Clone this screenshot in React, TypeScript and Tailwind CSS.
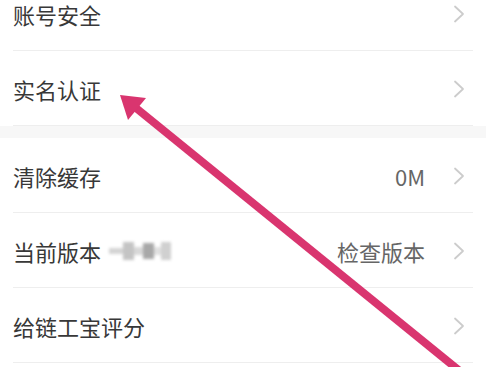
function Chevron() {
  return (
    <svg width="12" height="18" viewBox="0 0 12 18" className="shrink-0">
      <path d="M2 1.5 L10 9 L2 16.5" fill="none" stroke="#cccccc" strokeWidth="1.8" strokeLinecap="round" strokeLinejoin="round" />
    </svg>
  );
}

function Row({ label, value, extra, first }: { label: string; value?: string; extra?: React.ReactNode; first?: boolean }) {
  return (
    <div
      className={
        first
          ? "mx-[13px] h-[51px] border-b border-[#eeeeee] flex items-start pt-[3px]"
          : "mx-[13px] h-[75px] border-b border-[#eeeeee] flex items-center pt-[2px]"
      }
    >
      <span className="text-[22px] leading-[22px] text-[#383838]">{label}</span>
      {extra}
      <div className="flex-1" />
      {value && <span className="text-[22px] leading-[22px] text-[#666666] mr-[28px]">{value}</span>}
      <div className="mr-[8px] flex items-center h-[22px]">
        <Chevron />
      </div>
    </div>
  );
}

function BlurredVersion() {
  return (
    <div className="ml-[8px] flex items-center blur-[1.5px]">
      <div className="w-[14px] h-[6px] bg-[#d4d4d4]" />
      <div className="w-[11px] h-[18px] bg-[#c4c4c4]" />
      <div className="w-[9px] h-[8px] bg-[#d8d8d8]" />
      <div className="w-[11px] h-[16px] bg-[#a8a8a8]" />
      <div className="w-[7px] h-[8px] bg-[#e0e0e0]" />
      <div className="w-[10px] h-[18px] bg-[#d0d0d0]" />
    </div>
  );
}

export default function App() {
  return (
    <div
      className="relative w-[486px] h-[367px] overflow-hidden bg-white"
      style={{ fontFamily: '"Noto Sans CJK SC", "Noto Sans", sans-serif' }}
    >
      <Row first label="账号安全" />
      <Row label="实名认证" />
      <div className="h-[12px] bg-[#f7f7f7]" />
      <Row label="清除缓存" value="0M" />
      <Row label="当前版本" value="检查版本" extra={<BlurredVersion />} />
      <Row label="给链工宝评分" />

      {/* annotation arrow */}
      <svg className="absolute inset-0 pointer-events-none" width="486" height="367" viewBox="0 0 486 367">
        <line x1="136" y1="108" x2="472" y2="381" stroke="#d9356f" strokeWidth="8" />
        <polygon points="120,95 146,98 128,120" fill="#d9356f" />
      </svg>
    </div>
  );
}
